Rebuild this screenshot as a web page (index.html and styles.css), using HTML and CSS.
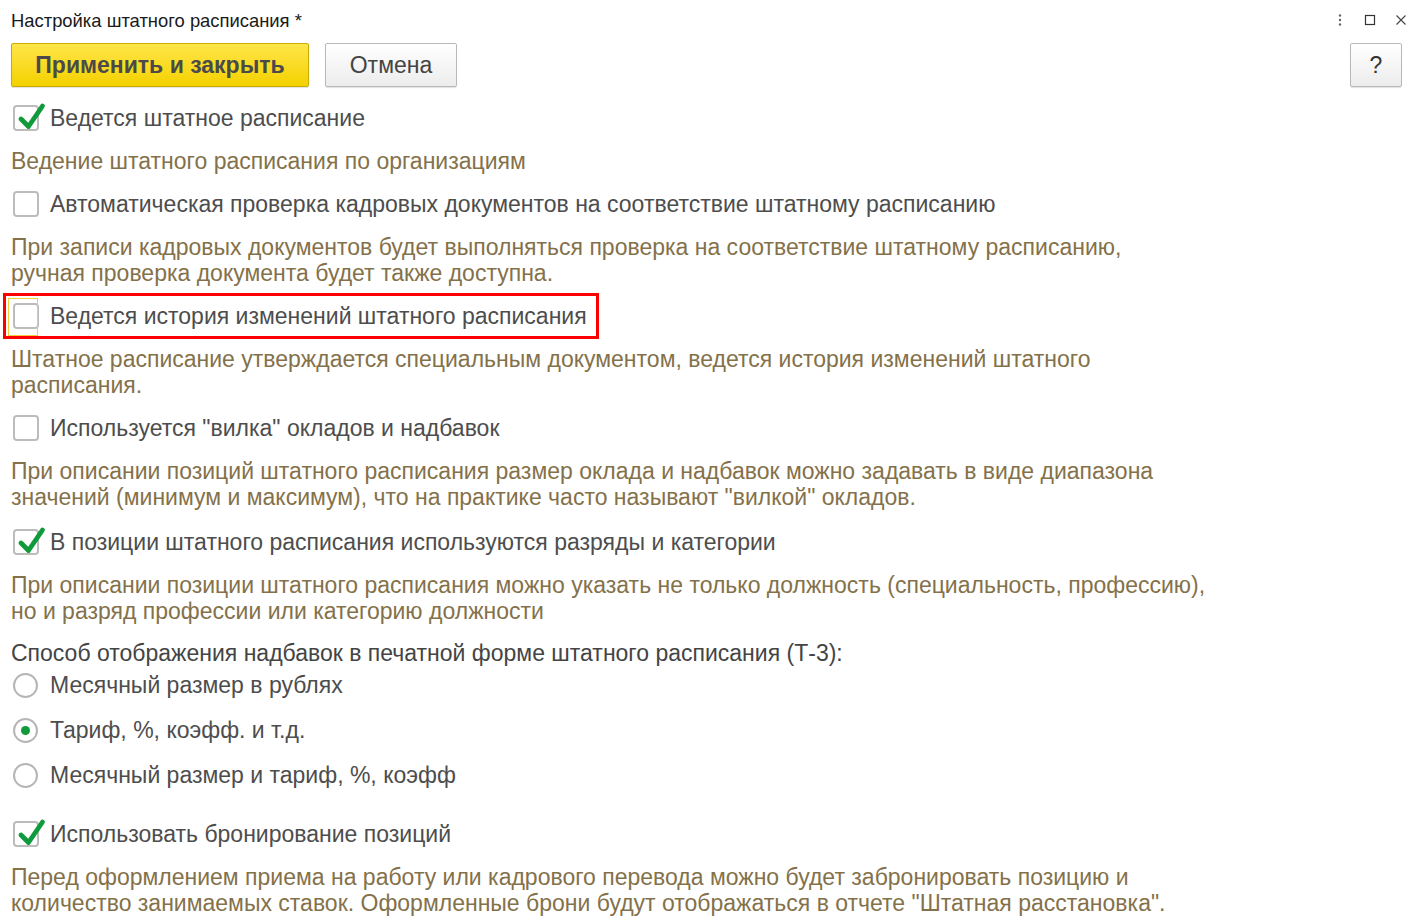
FILE: index.html
```html
<!DOCTYPE html>
<html lang="ru">
<head>
<meta charset="utf-8">
<title>Настройка штатного расписания</title>
<link rel="stylesheet" href="styles.css">
</head>
<body>
<div class="window">
  <div class="titlebar">
    <div class="title">Настройка штатного расписания *</div>
    <div class="controls">
      <svg class="ctl" width="10" height="14" viewBox="0 0 10 14"><circle cx="5" cy="2.5" r="1.2" fill="#666"/><circle cx="5" cy="7" r="1.2" fill="#666"/><circle cx="5" cy="11.5" r="1.2" fill="#666"/></svg>
      <svg class="ctl" width="12" height="12" viewBox="0 0 12 12"><rect x="1.5" y="1.5" width="9" height="9" fill="none" stroke="#333" stroke-width="1.2"/></svg>
      <svg class="ctl" width="12" height="12" viewBox="0 0 12 12"><path d="M1.5 1.5 L10.5 10.5 M10.5 1.5 L1.5 10.5" stroke="#444" stroke-width="1.1"/></svg>
    </div>
  </div>
  <div class="toolbar">
    <button class="btn btn-primary">Применить и закрыть</button>
    <button class="btn btn-cancel">Отмена</button>
    <button class="btn btn-help">?</button>
  </div>
  <div class="content">
    <div class="row"><span class="cb checked"><svg viewBox="0 0 30 30"><path d="M5 16 L12.5 23.5 L26.5 3" fill="none" stroke="#0f9a3c" stroke-width="4.8" stroke-linecap="round" stroke-linejoin="round"/></svg></span><span class="label">Ведется штатное расписание</span></div>
    <div class="hint">Ведение штатного расписания по организациям</div>
    <div class="row"><span class="cb"></span><span class="label">Автоматическая проверка кадровых документов на соответствие штатному расписанию</span></div>
    <div class="hint">При записи кадровых документов будет выполняться проверка на соответствие штатному расписанию,<br>ручная проверка документа будет также доступна.</div>
    <div class="row marked"><span class="cb focused"></span><span class="label">Ведется история изменений штатного расписания</span></div>
    <div class="hint">Штатное расписание утверждается специальным документом, ведется история изменений штатного<br>расписания.</div>
    <div class="row"><span class="cb"></span><span class="label">Используется "вилка" окладов и надбавок</span></div>
    <div class="hint">При описании позиций штатного расписания размер оклада и надбавок можно задавать в виде диапазона<br>значений (минимум и максимум), что на практике часто называют "вилкой" окладов.</div>
    <div class="row row-gap"><span class="cb checked"><svg viewBox="0 0 30 30"><path d="M5 16 L12.5 23.5 L26.5 3" fill="none" stroke="#0f9a3c" stroke-width="4.8" stroke-linecap="round" stroke-linejoin="round"/></svg></span><span class="label">В позиции штатного расписания используются разряды и категории</span></div>
    <div class="hint">При описании позиции штатного расписания можно указать не только должность (специальность, профессию),<br>но и разряд профессии или категорию должности</div>
    <div class="group-label">Способ отображения надбавок в печатной форме штатного расписания (Т-3):</div>
    <div class="radios">
      <div class="radio-row"><span class="rb"></span><span class="label">Месячный размер в рублях</span></div>
      <div class="radio-row"><span class="rb on"></span><span class="label">Тариф, %, коэфф. и т.д.</span></div>
      <div class="radio-row"><span class="rb"></span><span class="label">Месячный размер и тариф, %, коэфф</span></div>
    </div>
    <div class="row row-after-radios"><span class="cb checked"><svg viewBox="0 0 30 30"><path d="M5 16 L12.5 23.5 L26.5 3" fill="none" stroke="#0f9a3c" stroke-width="4.8" stroke-linecap="round" stroke-linejoin="round"/></svg></span><span class="label">Использовать бронирование позиций</span></div>
    <div class="hint">Перед оформлением приема на работу или кадрового перевода можно будет забронировать позицию и<br>количество занимаемых ставок. Оформленные брони будут отображаться в отчете "Штатная расстановка".</div>
  </div>
</div>
</body>
</html>
```
FILE: styles.css
```css
html, body {
  margin: 0;
  padding: 0;
  background: #ffffff;
}
body {
  font-family: "Liberation Sans", Arial, sans-serif;
  color: #4d4d4d;
  width: 1414px;
  height: 920px;
  overflow: hidden;
}
.titlebar {
  height: 40px;
  display: flex;
  align-items: center;
  justify-content: space-between;
  padding: 0 7px 0 11px;
}
.title {
  font-size: 18.4px;
  color: #1a1a1a;
  padding-top: 1px;
}
.controls {
  display: flex;
  align-items: center;
  gap: 19px;
}
.ctl { display: block; }
.toolbar {
  display: flex;
  align-items: center;
  gap: 16px;
  padding: 3px 12px 0 11px;
}
.btn {
  height: 44px;
  box-sizing: border-box;
  border: 1px solid #b9b9b9;
  border-radius: 2px;
  background: linear-gradient(#ffffff, #ececec);
  box-shadow: 0 1px 1px rgba(0,0,0,0.12);
  font-family: "Liberation Sans", Arial, sans-serif;
  font-size: 23px;
  color: #444;
  padding: 0;
  margin: 0;
}
.btn-primary {
  width: 298px;
  background: linear-gradient(#ffe649, #f4d100);
  border-color: #c9ab00;
  font-weight: bold;
  color: #4a4a4a;
}
.btn-cancel {
  width: 132px;
}
.btn-help {
  margin-left: auto;
  width: 52px;
  font-size: 23px;
  color: #333;
}
.content {
  display: flex;
  flex-direction: column;
  align-items: flex-start;
  gap: 15px;
  padding: 16px 0 0 11px;
  font-size: 23px;
}
.row {
  position: relative;
  display: flex;
  align-items: center;
  height: 30px;
  padding-left: 2px;
}
.row-gap { margin-top: 2px; }
.label {
  line-height: 26px;
  color: #4d4d4d;
  white-space: nowrap;
}
.cb {
  position: relative;
  width: 26px;
  height: 26px;
  box-sizing: border-box;
  border: 2px solid #bcbcbc;
  border-radius: 4px;
  background: #fff;
  margin-right: 11px;
  flex: none;
}
.cb svg {
  position: absolute;
  left: 1px;
  top: -4px;
  width: 30px;
  height: 30px;
  overflow: visible;
}
.cb.focused::before {
  content: "";
  position: absolute;
  left: -7px;
  top: -7px;
  width: 28px;
  height: 36px;
  border: 1px solid #f2cd3c;
}
.marked::after {
  content: "";
  position: absolute;
  left: -8px;
  right: -12px;
  top: -8px;
  bottom: -8px;
  border: 3px solid #ff0000;
  box-sizing: border-box;
}
.hint {
  line-height: 26px;
  color: #84714a;
  white-space: nowrap;
}
.group-label {
  line-height: 26px;
  color: #444;
  margin-top: 1px;
}
.radios {
  display: flex;
  flex-direction: column;
  gap: 15px;
  margin-top: -11px;
}
.radio-row {
  display: flex;
  align-items: center;
  height: 30px;
  padding-left: 2px;
}
.rb {
  position: relative;
  width: 25px;
  height: 25px;
  box-sizing: border-box;
  border: 2px solid #b5b5b5;
  border-radius: 50%;
  background: #fff;
  margin-right: 12px;
  flex: none;
}
.rb.on::after {
  content: "";
  position: absolute;
  left: 6px;
  top: 6px;
  width: 9px;
  height: 9px;
  border-radius: 50%;
  background: #0f9a3c;
}
.row-after-radios { margin-top: 14px; }
```
